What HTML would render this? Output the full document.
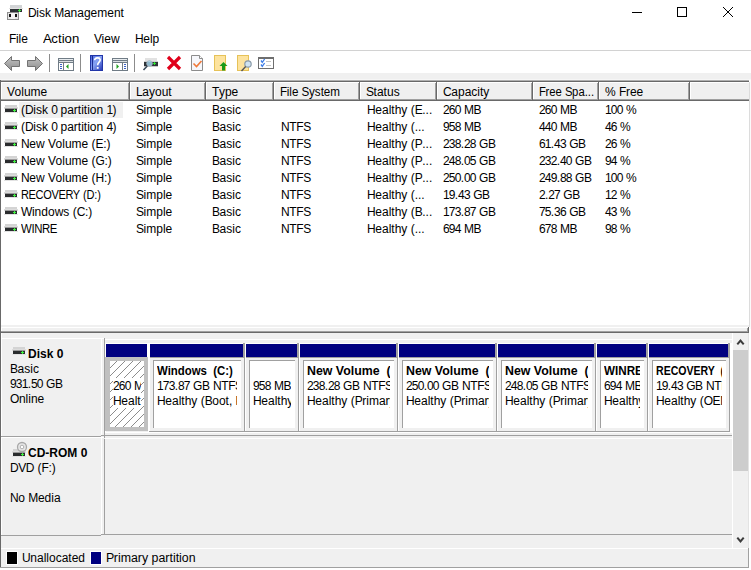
<!DOCTYPE html>
<html><head><meta charset="utf-8">
<style>
*{margin:0;padding:0;box-sizing:border-box}
html,body{width:751px;height:570px;overflow:hidden;background:#fff}
body{position:relative;font-family:"Liberation Sans",sans-serif;font-size:12px;color:#000}
.a{position:absolute}
.t{position:absolute;white-space:pre;line-height:15px;font-size:12px}
.b{font-weight:bold}
i{font-style:normal}
u{text-decoration:none}
svg{position:absolute;overflow:visible}
</style></head><body>
<div class="t" style="left:28px;top:6px;"><u style="letter-spacing:-0.4px">D</u>isk <u style="letter-spacing:-0.4px">M</u>anagement</div>
<div class="a" style="left:632px;top:12px;width:10px;height:1px;background:#000;"></div>
<div class="a" style="left:677px;top:7px;width:10px;height:10px;background:transparent;border:1px solid #000"></div>
<svg style="left:0;top:0" width="751" height="30" shape-rendering="crispEdges"><path d="M723 7h1v1h-1zM732 7h1v1h-1zM724 8h1v1h-1zM731 8h1v1h-1zM725 9h1v1h-1zM730 9h1v1h-1zM726 10h1v1h-1zM729 10h1v1h-1zM727 11h1v1h-1zM728 11h1v1h-1zM728 12h1v1h-1zM727 12h1v1h-1zM729 13h1v1h-1zM726 13h1v1h-1zM730 14h1v1h-1zM725 14h1v1h-1zM731 15h1v1h-1zM724 15h1v1h-1zM732 16h1v1h-1zM723 16h1v1h-1z" fill="#000"/></svg>
<div class="t" style="left:9px;top:32px;"><u style="letter-spacing:-0.4px">F</u>ile</div>
<div class="t" style="left:43px;top:32px;"><span style="display:inline-block;transform:scaleX(1.1);transform-origin:0 0"><u style="letter-spacing:-0.4px">A</u>ction</span></div>
<div class="t" style="left:94px;top:32px;"><u style="letter-spacing:-0.4px">V</u>iew</div>
<div class="t" style="left:135px;top:32px;"><u style="letter-spacing:-0.4px">H</u>elp</div>
<div class="a" style="left:0px;top:50px;width:751px;height:1px;background:#d2d2d2;"></div>
<div class="a" style="left:49px;top:54px;width:1px;height:18px;background:#8c8c8c;"></div>
<div class="a" style="left:80px;top:54px;width:1px;height:18px;background:#8c8c8c;"></div>
<div class="a" style="left:134px;top:54px;width:1px;height:18px;background:#8c8c8c;"></div>
<div class="a" style="left:0px;top:73px;width:751px;height:7px;background:#f0f0f0;"></div>
<div class="a" style="left:0px;top:79px;width:751px;height:1px;background:#f6f6f6;"></div>
<div class="a" style="left:0px;top:80px;width:750px;height:1px;background:#b0b0b0;"></div>
<div class="a" style="left:0px;top:81px;width:750px;height:1px;background:#696969;"></div>
<div class="a" style="left:0px;top:80px;width:1px;height:247px;background:#696969;"></div>
<div class="a" style="left:1px;top:82px;width:748px;height:19px;background:#f0f0f0;"></div>
<div class="a" style="left:1px;top:82px;width:748px;height:1px;background:#fff;"></div>
<div class="a" style="left:1px;top:82px;width:1px;height:18px;background:#fff;"></div>
<div class="a" style="left:1px;top:99px;width:748px;height:1px;background:#a0a0a0;"></div>
<div class="a" style="left:1px;top:100px;width:748px;height:1px;background:#696969;"></div>
<div class="t" style="left:7px;top:85px;"><u style="letter-spacing:-0.4px">V</u>olume</div>
<div class="a" style="left:128px;top:83px;width:1px;height:16px;background:#a0a0a0;"></div>
<div class="a" style="left:129px;top:82px;width:1px;height:18px;background:#696969;"></div>
<div class="a" style="left:130px;top:82px;width:1px;height:17px;background:#fff;"></div>
<div class="t" style="left:136px;top:85px;"><u style="letter-spacing:-0.4px">L</u>ayout</div>
<div class="a" style="left:204px;top:83px;width:1px;height:16px;background:#a0a0a0;"></div>
<div class="a" style="left:205px;top:82px;width:1px;height:18px;background:#696969;"></div>
<div class="a" style="left:206px;top:82px;width:1px;height:17px;background:#fff;"></div>
<div class="t" style="left:212px;top:85px;"><u style="letter-spacing:-0.4px">T</u>ype</div>
<div class="a" style="left:272px;top:83px;width:1px;height:16px;background:#a0a0a0;"></div>
<div class="a" style="left:273px;top:82px;width:1px;height:18px;background:#696969;"></div>
<div class="a" style="left:274px;top:82px;width:1px;height:17px;background:#fff;"></div>
<div class="t" style="left:280px;top:85px;"><span style="display:inline-block;transform:scaleX(0.97);transform-origin:0 0"><u style="letter-spacing:-0.4px">F</u>ile <u style="letter-spacing:-0.4px">S</u>ystem</span></div>
<div class="a" style="left:358px;top:83px;width:1px;height:16px;background:#a0a0a0;"></div>
<div class="a" style="left:359px;top:82px;width:1px;height:18px;background:#696969;"></div>
<div class="a" style="left:360px;top:82px;width:1px;height:17px;background:#fff;"></div>
<div class="t" style="left:366px;top:85px;"><u style="letter-spacing:-0.4px">S</u>tatus</div>
<div class="a" style="left:435px;top:83px;width:1px;height:16px;background:#a0a0a0;"></div>
<div class="a" style="left:436px;top:82px;width:1px;height:18px;background:#696969;"></div>
<div class="a" style="left:437px;top:82px;width:1px;height:17px;background:#fff;"></div>
<div class="t" style="left:443px;top:85px;"><u style="letter-spacing:-0.4px">C</u>apacity</div>
<div class="a" style="left:531px;top:83px;width:1px;height:16px;background:#a0a0a0;"></div>
<div class="a" style="left:532px;top:82px;width:1px;height:18px;background:#696969;"></div>
<div class="a" style="left:533px;top:82px;width:1px;height:17px;background:#fff;"></div>
<div class="t" style="left:539px;top:85px;"><span style="display:inline-block;transform:scaleX(0.94);transform-origin:0 0"><u style="letter-spacing:-0.4px">F</u>ree <u style="letter-spacing:-0.4px">S</u>pa...</span></div>
<div class="a" style="left:597px;top:83px;width:1px;height:16px;background:#a0a0a0;"></div>
<div class="a" style="left:598px;top:82px;width:1px;height:18px;background:#696969;"></div>
<div class="a" style="left:599px;top:82px;width:1px;height:17px;background:#fff;"></div>
<div class="t" style="left:605px;top:85px;">% <u style="letter-spacing:-0.4px">F</u>ree</div>
<div class="a" style="left:688px;top:83px;width:1px;height:16px;background:#a0a0a0;"></div>
<div class="a" style="left:689px;top:82px;width:1px;height:18px;background:#696969;"></div>
<div class="a" style="left:690px;top:82px;width:1px;height:17px;background:#fff;"></div>
<div class="a" style="left:749px;top:82px;width:1px;height:245px;background:#dcdcdc;"></div>
<div class="a" style="left:749px;top:80px;width:1px;height:249px;background:#fff;"></div>
<div class="a" style="left:1px;top:101px;width:748px;height:224px;background:#fff;"></div>
<div class="a" style="left:19px;top:102px;width:104px;height:16px;background:#f0f0f0;"></div>
<svg style="left:4px;top:105px" width="14" height="8" shape-rendering="crispEdges"><rect x="1" y="0" width="12" height="3" fill="#d4d4d4"/><rect x="0" y="2" width="14" height="2" fill="#dcdcdc"/><rect x="1" y="3" width="12" height="1" fill="#9a9a9a"/><rect x="1" y="4" width="12" height="3" fill="#2a2c2e"/><rect x="0" y="7" width="14" height="1" fill="#e2e2e2"/><rect x="9" y="5" width="3" height="1" fill="#3ef03e"/><rect x="10" y="4" width="1" height="3" fill="#3ef03e"/></svg>
<div class="t" style="left:21px;top:103px;">(<u style="letter-spacing:-0.4px">D</u>isk <i style="letter-spacing:-0.8px">0</i> partition <i style="letter-spacing:-0.8px">1</i>)</div>
<div class="t" style="left:136px;top:103px;"><u style="letter-spacing:-0.4px">S</u>imple</div>
<div class="t" style="left:212px;top:103px;"><u style="letter-spacing:-0.4px">B</u>asic</div>
<div class="t" style="left:367px;top:103px;"><u style="letter-spacing:-0.4px">H</u>ealthy (<u style="letter-spacing:-0.4px">E</u>...</div>
<div class="t" style="left:443px;top:103px;"><i style="letter-spacing:-0.8px">260</i> <u style="letter-spacing:-0.4px">MB</u></div>
<div class="t" style="left:539px;top:103px;"><i style="letter-spacing:-0.8px">260</i> <u style="letter-spacing:-0.4px">MB</u></div>
<div class="t" style="left:605px;top:103px;"><i style="letter-spacing:-0.8px">100</i> %</div>
<svg style="left:4px;top:122px" width="14" height="8" shape-rendering="crispEdges"><rect x="1" y="0" width="12" height="3" fill="#d4d4d4"/><rect x="0" y="2" width="14" height="2" fill="#dcdcdc"/><rect x="1" y="3" width="12" height="1" fill="#9a9a9a"/><rect x="1" y="4" width="12" height="3" fill="#2a2c2e"/><rect x="0" y="7" width="14" height="1" fill="#e2e2e2"/><rect x="9" y="5" width="3" height="1" fill="#3ef03e"/><rect x="10" y="4" width="1" height="3" fill="#3ef03e"/></svg>
<div class="t" style="left:21px;top:120px;">(<u style="letter-spacing:-0.4px">D</u>isk <i style="letter-spacing:-0.8px">0</i> partition <i style="letter-spacing:-0.8px">4</i>)</div>
<div class="t" style="left:136px;top:120px;"><u style="letter-spacing:-0.4px">S</u>imple</div>
<div class="t" style="left:212px;top:120px;"><u style="letter-spacing:-0.4px">B</u>asic</div>
<div class="t" style="left:281px;top:120px;"><u style="letter-spacing:-0.4px">NTFS</u></div>
<div class="t" style="left:367px;top:120px;"><u style="letter-spacing:-0.4px">H</u>ealthy (...</div>
<div class="t" style="left:443px;top:120px;"><i style="letter-spacing:-0.8px">958</i> <u style="letter-spacing:-0.4px">MB</u></div>
<div class="t" style="left:539px;top:120px;"><i style="letter-spacing:-0.8px">440</i> <u style="letter-spacing:-0.4px">MB</u></div>
<div class="t" style="left:605px;top:120px;"><i style="letter-spacing:-0.8px">46</i> %</div>
<svg style="left:4px;top:139px" width="14" height="8" shape-rendering="crispEdges"><rect x="1" y="0" width="12" height="3" fill="#d4d4d4"/><rect x="0" y="2" width="14" height="2" fill="#dcdcdc"/><rect x="1" y="3" width="12" height="1" fill="#9a9a9a"/><rect x="1" y="4" width="12" height="3" fill="#2a2c2e"/><rect x="0" y="7" width="14" height="1" fill="#e2e2e2"/><rect x="9" y="5" width="3" height="1" fill="#3ef03e"/><rect x="10" y="4" width="1" height="3" fill="#3ef03e"/></svg>
<div class="t" style="left:21px;top:137px;"><u style="letter-spacing:-0.4px">N</u>ew <u style="letter-spacing:-0.4px">V</u>olume (<u style="letter-spacing:-0.4px">E</u>:)</div>
<div class="t" style="left:136px;top:137px;"><u style="letter-spacing:-0.4px">S</u>imple</div>
<div class="t" style="left:212px;top:137px;"><u style="letter-spacing:-0.4px">B</u>asic</div>
<div class="t" style="left:281px;top:137px;"><u style="letter-spacing:-0.4px">NTFS</u></div>
<div class="t" style="left:367px;top:137px;"><u style="letter-spacing:-0.4px">H</u>ealthy (<u style="letter-spacing:-0.4px">P</u>...</div>
<div class="t" style="left:443px;top:137px;"><i style="letter-spacing:-0.8px">238</i>.<i style="letter-spacing:-0.8px">28</i> <u style="letter-spacing:-0.4px">GB</u></div>
<div class="t" style="left:539px;top:137px;"><i style="letter-spacing:-0.8px">61</i>.<i style="letter-spacing:-0.8px">43</i> <u style="letter-spacing:-0.4px">GB</u></div>
<div class="t" style="left:605px;top:137px;"><i style="letter-spacing:-0.8px">26</i> %</div>
<svg style="left:4px;top:156px" width="14" height="8" shape-rendering="crispEdges"><rect x="1" y="0" width="12" height="3" fill="#d4d4d4"/><rect x="0" y="2" width="14" height="2" fill="#dcdcdc"/><rect x="1" y="3" width="12" height="1" fill="#9a9a9a"/><rect x="1" y="4" width="12" height="3" fill="#2a2c2e"/><rect x="0" y="7" width="14" height="1" fill="#e2e2e2"/><rect x="9" y="5" width="3" height="1" fill="#3ef03e"/><rect x="10" y="4" width="1" height="3" fill="#3ef03e"/></svg>
<div class="t" style="left:21px;top:154px;"><u style="letter-spacing:-0.4px">N</u>ew <u style="letter-spacing:-0.4px">V</u>olume (<u style="letter-spacing:-0.4px">G</u>:)</div>
<div class="t" style="left:136px;top:154px;"><u style="letter-spacing:-0.4px">S</u>imple</div>
<div class="t" style="left:212px;top:154px;"><u style="letter-spacing:-0.4px">B</u>asic</div>
<div class="t" style="left:281px;top:154px;"><u style="letter-spacing:-0.4px">NTFS</u></div>
<div class="t" style="left:367px;top:154px;"><u style="letter-spacing:-0.4px">H</u>ealthy (<u style="letter-spacing:-0.4px">P</u>...</div>
<div class="t" style="left:443px;top:154px;"><i style="letter-spacing:-0.8px">248</i>.<i style="letter-spacing:-0.8px">05</i> <u style="letter-spacing:-0.4px">GB</u></div>
<div class="t" style="left:539px;top:154px;"><i style="letter-spacing:-0.8px">232</i>.<i style="letter-spacing:-0.8px">40</i> <u style="letter-spacing:-0.4px">GB</u></div>
<div class="t" style="left:605px;top:154px;"><i style="letter-spacing:-0.8px">94</i> %</div>
<svg style="left:4px;top:173px" width="14" height="8" shape-rendering="crispEdges"><rect x="1" y="0" width="12" height="3" fill="#d4d4d4"/><rect x="0" y="2" width="14" height="2" fill="#dcdcdc"/><rect x="1" y="3" width="12" height="1" fill="#9a9a9a"/><rect x="1" y="4" width="12" height="3" fill="#2a2c2e"/><rect x="0" y="7" width="14" height="1" fill="#e2e2e2"/><rect x="9" y="5" width="3" height="1" fill="#3ef03e"/><rect x="10" y="4" width="1" height="3" fill="#3ef03e"/></svg>
<div class="t" style="left:21px;top:171px;"><u style="letter-spacing:-0.4px">N</u>ew <u style="letter-spacing:-0.4px">V</u>olume (<u style="letter-spacing:-0.4px">H</u>:)</div>
<div class="t" style="left:136px;top:171px;"><u style="letter-spacing:-0.4px">S</u>imple</div>
<div class="t" style="left:212px;top:171px;"><u style="letter-spacing:-0.4px">B</u>asic</div>
<div class="t" style="left:281px;top:171px;"><u style="letter-spacing:-0.4px">NTFS</u></div>
<div class="t" style="left:367px;top:171px;"><u style="letter-spacing:-0.4px">H</u>ealthy (<u style="letter-spacing:-0.4px">P</u>...</div>
<div class="t" style="left:443px;top:171px;"><i style="letter-spacing:-0.8px">250</i>.<i style="letter-spacing:-0.8px">00</i> <u style="letter-spacing:-0.4px">GB</u></div>
<div class="t" style="left:539px;top:171px;"><i style="letter-spacing:-0.8px">249</i>.<i style="letter-spacing:-0.8px">88</i> <u style="letter-spacing:-0.4px">GB</u></div>
<div class="t" style="left:605px;top:171px;"><i style="letter-spacing:-0.8px">100</i> %</div>
<svg style="left:4px;top:190px" width="14" height="8" shape-rendering="crispEdges"><rect x="1" y="0" width="12" height="3" fill="#d4d4d4"/><rect x="0" y="2" width="14" height="2" fill="#dcdcdc"/><rect x="1" y="3" width="12" height="1" fill="#9a9a9a"/><rect x="1" y="4" width="12" height="3" fill="#2a2c2e"/><rect x="0" y="7" width="14" height="1" fill="#e2e2e2"/><rect x="9" y="5" width="3" height="1" fill="#3ef03e"/><rect x="10" y="4" width="1" height="3" fill="#3ef03e"/></svg>
<div class="t" style="left:21px;top:188px;"><span style="display:inline-block;transform:scaleX(0.92);transform-origin:0 0"><u style="letter-spacing:-0.4px">RECOVERY</u> (<u style="letter-spacing:-0.4px">D</u>:)</span></div>
<div class="t" style="left:136px;top:188px;"><u style="letter-spacing:-0.4px">S</u>imple</div>
<div class="t" style="left:212px;top:188px;"><u style="letter-spacing:-0.4px">B</u>asic</div>
<div class="t" style="left:281px;top:188px;"><u style="letter-spacing:-0.4px">NTFS</u></div>
<div class="t" style="left:367px;top:188px;"><u style="letter-spacing:-0.4px">H</u>ealthy (...</div>
<div class="t" style="left:443px;top:188px;"><i style="letter-spacing:-0.8px">19</i>.<i style="letter-spacing:-0.8px">43</i> <u style="letter-spacing:-0.4px">GB</u></div>
<div class="t" style="left:539px;top:188px;"><i style="letter-spacing:-0.8px">2</i>.<i style="letter-spacing:-0.8px">27</i> <u style="letter-spacing:-0.4px">GB</u></div>
<div class="t" style="left:605px;top:188px;"><i style="letter-spacing:-0.8px">12</i> %</div>
<svg style="left:4px;top:207px" width="14" height="8" shape-rendering="crispEdges"><rect x="1" y="0" width="12" height="3" fill="#d4d4d4"/><rect x="0" y="2" width="14" height="2" fill="#dcdcdc"/><rect x="1" y="3" width="12" height="1" fill="#9a9a9a"/><rect x="1" y="4" width="12" height="3" fill="#2a2c2e"/><rect x="0" y="7" width="14" height="1" fill="#e2e2e2"/><rect x="9" y="5" width="3" height="1" fill="#3ef03e"/><rect x="10" y="4" width="1" height="3" fill="#3ef03e"/></svg>
<div class="t" style="left:21px;top:205px;"><u style="letter-spacing:-0.4px">W</u>indows (<u style="letter-spacing:-0.4px">C</u>:)</div>
<div class="t" style="left:136px;top:205px;"><u style="letter-spacing:-0.4px">S</u>imple</div>
<div class="t" style="left:212px;top:205px;"><u style="letter-spacing:-0.4px">B</u>asic</div>
<div class="t" style="left:281px;top:205px;"><u style="letter-spacing:-0.4px">NTFS</u></div>
<div class="t" style="left:367px;top:205px;"><u style="letter-spacing:-0.4px">H</u>ealthy (<u style="letter-spacing:-0.4px">B</u>...</div>
<div class="t" style="left:443px;top:205px;"><i style="letter-spacing:-0.8px">173</i>.<i style="letter-spacing:-0.8px">87</i> <u style="letter-spacing:-0.4px">GB</u></div>
<div class="t" style="left:539px;top:205px;"><i style="letter-spacing:-0.8px">75</i>.<i style="letter-spacing:-0.8px">36</i> <u style="letter-spacing:-0.4px">GB</u></div>
<div class="t" style="left:605px;top:205px;"><i style="letter-spacing:-0.8px">43</i> %</div>
<svg style="left:4px;top:224px" width="14" height="8" shape-rendering="crispEdges"><rect x="1" y="0" width="12" height="3" fill="#d4d4d4"/><rect x="0" y="2" width="14" height="2" fill="#dcdcdc"/><rect x="1" y="3" width="12" height="1" fill="#9a9a9a"/><rect x="1" y="4" width="12" height="3" fill="#2a2c2e"/><rect x="0" y="7" width="14" height="1" fill="#e2e2e2"/><rect x="9" y="5" width="3" height="1" fill="#3ef03e"/><rect x="10" y="4" width="1" height="3" fill="#3ef03e"/></svg>
<div class="t" style="left:21px;top:222px;"><span style="display:inline-block;transform:scaleX(0.95);transform-origin:0 0"><u style="letter-spacing:-0.4px">WINRE</u></span></div>
<div class="t" style="left:136px;top:222px;"><u style="letter-spacing:-0.4px">S</u>imple</div>
<div class="t" style="left:212px;top:222px;"><u style="letter-spacing:-0.4px">B</u>asic</div>
<div class="t" style="left:281px;top:222px;"><u style="letter-spacing:-0.4px">NTFS</u></div>
<div class="t" style="left:367px;top:222px;"><u style="letter-spacing:-0.4px">H</u>ealthy (...</div>
<div class="t" style="left:443px;top:222px;"><i style="letter-spacing:-0.8px">694</i> <u style="letter-spacing:-0.4px">MB</u></div>
<div class="t" style="left:539px;top:222px;"><i style="letter-spacing:-0.8px">678</i> <u style="letter-spacing:-0.4px">MB</u></div>
<div class="t" style="left:605px;top:222px;"><i style="letter-spacing:-0.8px">98</i> %</div>
<div class="a" style="left:1px;top:325px;width:748px;height:2px;background:#f0f0f0;"></div>
<div class="a" style="left:750px;top:80px;width:1px;height:249px;background:#fafafa;"></div>
<div class="a" style="left:749px;top:82px;width:1px;height:245px;background:#dcdcdc;"></div>
<div class="a" style="left:0px;top:327px;width:748px;height:1px;background:#fff;"></div>
<div class="a" style="left:1px;top:328px;width:747px;height:3px;background:#f0f0f0;"></div>
<div class="a" style="left:1px;top:328px;width:1px;height:3px;background:#fff;"></div>
<div class="a" style="left:747px;top:328px;width:1px;height:3px;background:#a0a0a0;"></div>
<div class="a" style="left:748px;top:327px;width:1px;height:6px;background:#696969;"></div>
<div class="a" style="left:0px;top:331px;width:748px;height:1px;background:#a0a0a0;"></div>
<div class="a" style="left:0px;top:332px;width:749px;height:1px;background:#696969;"></div>
<div class="a" style="left:0px;top:327px;width:1px;height:241px;background:#696969;"></div>
<div class="a" style="left:1px;top:333px;width:747px;height:202px;background:#f0f0f0;"></div>
<div class="a" style="left:1px;top:333px;width:1px;height:234px;background:#fff;"></div>
<div class="a" style="left:1px;top:338px;width:103px;height:1px;background:#fff;"></div>
<div class="a" style="left:101px;top:339px;width:1px;height:96px;background:#fff;"></div>
<div class="a" style="left:104px;top:338px;width:1px;height:100px;background:#a0a0a0;"></div>
<div class="a" style="left:1px;top:436px;width:100px;height:1px;background:#a0a0a0;"></div>
<div class="a" style="left:101px;top:435px;width:3px;height:1px;background:#a0a0a0;"></div>
<svg style="left:12px;top:347px" width="14" height="8" shape-rendering="crispEdges"><rect x="1" y="0" width="12" height="3" fill="#d4d4d4"/><rect x="0" y="2" width="14" height="2" fill="#dcdcdc"/><rect x="1" y="3" width="12" height="1" fill="#9a9a9a"/><rect x="1" y="4" width="12" height="3" fill="#2a2c2e"/><rect x="0" y="7" width="14" height="1" fill="#e2e2e2"/><rect x="9" y="5" width="3" height="1" fill="#3ef03e"/><rect x="10" y="4" width="1" height="3" fill="#3ef03e"/></svg>
<div class="t b" style="left:28px;top:347px;">Disk <i style="letter-spacing:-0.8px">0</i></div>
<div class="t" style="left:10px;top:362px;"><u style="letter-spacing:-0.4px">B</u>asic</div>
<div class="t" style="left:10px;top:377px;"><i style="letter-spacing:-0.8px">931</i>.<i style="letter-spacing:-0.8px">50</i> <u style="letter-spacing:-0.4px">GB</u></div>
<div class="t" style="left:10px;top:392px;"><u style="letter-spacing:-0.4px">O</u>nline</div>
<div class="a" style="left:105px;top:339px;width:627px;height:96px;background:#fff;"></div>
<div class="a" style="left:105px;top:338px;width:627px;height:5px;background:#f0f0f0;"></div>
<div class="a" style="left:105px;top:339px;width:627px;height:1px;background:#fff;"></div>
<div class="a" style="left:106px;top:343px;width:44px;height:1px;background:#fff;"></div>
<div class="a" style="left:106px;top:344px;width:41px;height:13px;background:#000080;"></div>
<div class="a" style="left:106px;top:357px;width:44px;height:75px;background:#f0f0f0;"></div>
<div class="a" style="left:106px;top:344px;width:41px;height:13px;background:#000080;"></div>
<div class="a" style="left:105px;top:357px;width:43px;height:74px;background:#c0c0c0;"></div>
<div class="a" style="left:148px;top:343px;width:2px;height:89px;background:#fff;"></div>
<svg style="left:0;top:0" width="751" height="570" shape-rendering="crispEdges"><rect x="110" y="361" width="34" height="66" fill="#fff"/><path d="M116 361h1v1h-1zM124 361h1v1h-1zM132 361h1v1h-1zM140 361h1v1h-1zM115 362h1v1h-1zM123 362h1v1h-1zM131 362h1v1h-1zM139 362h1v1h-1zM114 363h1v1h-1zM122 363h1v1h-1zM130 363h1v1h-1zM138 363h1v1h-1zM113 364h1v1h-1zM121 364h1v1h-1zM129 364h1v1h-1zM137 364h1v1h-1zM112 365h1v1h-1zM120 365h1v1h-1zM128 365h1v1h-1zM136 365h1v1h-1zM111 366h1v1h-1zM119 366h1v1h-1zM127 366h1v1h-1zM135 366h1v1h-1zM143 366h1v1h-1zM110 367h1v1h-1zM118 367h1v1h-1zM126 367h1v1h-1zM134 367h1v1h-1zM142 367h1v1h-1zM117 368h1v1h-1zM125 368h1v1h-1zM133 368h1v1h-1zM141 368h1v1h-1zM116 369h1v1h-1zM124 369h1v1h-1zM132 369h1v1h-1zM140 369h1v1h-1zM115 370h1v1h-1zM123 370h1v1h-1zM131 370h1v1h-1zM139 370h1v1h-1zM114 371h1v1h-1zM122 371h1v1h-1zM130 371h1v1h-1zM138 371h1v1h-1zM113 372h1v1h-1zM121 372h1v1h-1zM129 372h1v1h-1zM137 372h1v1h-1zM112 373h1v1h-1zM120 373h1v1h-1zM128 373h1v1h-1zM136 373h1v1h-1zM111 374h1v1h-1zM119 374h1v1h-1zM127 374h1v1h-1zM135 374h1v1h-1zM143 374h1v1h-1zM110 375h1v1h-1zM118 375h1v1h-1zM126 375h1v1h-1zM134 375h1v1h-1zM142 375h1v1h-1zM117 376h1v1h-1zM125 376h1v1h-1zM133 376h1v1h-1zM141 376h1v1h-1zM116 377h1v1h-1zM124 377h1v1h-1zM132 377h1v1h-1zM140 377h1v1h-1zM115 378h1v1h-1zM123 378h1v1h-1zM131 378h1v1h-1zM139 378h1v1h-1zM114 379h1v1h-1zM122 379h1v1h-1zM130 379h1v1h-1zM138 379h1v1h-1zM113 380h1v1h-1zM121 380h1v1h-1zM129 380h1v1h-1zM137 380h1v1h-1zM112 381h1v1h-1zM120 381h1v1h-1zM128 381h1v1h-1zM136 381h1v1h-1zM111 382h1v1h-1zM119 382h1v1h-1zM127 382h1v1h-1zM135 382h1v1h-1zM143 382h1v1h-1zM110 383h1v1h-1zM118 383h1v1h-1zM126 383h1v1h-1zM134 383h1v1h-1zM142 383h1v1h-1zM117 384h1v1h-1zM125 384h1v1h-1zM133 384h1v1h-1zM141 384h1v1h-1zM116 385h1v1h-1zM124 385h1v1h-1zM132 385h1v1h-1zM140 385h1v1h-1zM115 386h1v1h-1zM123 386h1v1h-1zM131 386h1v1h-1zM139 386h1v1h-1zM114 387h1v1h-1zM122 387h1v1h-1zM130 387h1v1h-1zM138 387h1v1h-1zM113 388h1v1h-1zM121 388h1v1h-1zM129 388h1v1h-1zM137 388h1v1h-1zM112 389h1v1h-1zM120 389h1v1h-1zM128 389h1v1h-1zM136 389h1v1h-1zM111 390h1v1h-1zM119 390h1v1h-1zM127 390h1v1h-1zM135 390h1v1h-1zM143 390h1v1h-1zM110 391h1v1h-1zM118 391h1v1h-1zM126 391h1v1h-1zM134 391h1v1h-1zM142 391h1v1h-1zM117 392h1v1h-1zM125 392h1v1h-1zM133 392h1v1h-1zM141 392h1v1h-1zM116 393h1v1h-1zM124 393h1v1h-1zM132 393h1v1h-1zM140 393h1v1h-1zM115 394h1v1h-1zM123 394h1v1h-1zM131 394h1v1h-1zM139 394h1v1h-1zM114 395h1v1h-1zM122 395h1v1h-1zM130 395h1v1h-1zM138 395h1v1h-1zM113 396h1v1h-1zM121 396h1v1h-1zM129 396h1v1h-1zM137 396h1v1h-1zM112 397h1v1h-1zM120 397h1v1h-1zM128 397h1v1h-1zM136 397h1v1h-1zM111 398h1v1h-1zM119 398h1v1h-1zM127 398h1v1h-1zM135 398h1v1h-1zM143 398h1v1h-1zM110 399h1v1h-1zM118 399h1v1h-1zM126 399h1v1h-1zM134 399h1v1h-1zM142 399h1v1h-1zM117 400h1v1h-1zM125 400h1v1h-1zM133 400h1v1h-1zM141 400h1v1h-1zM116 401h1v1h-1zM124 401h1v1h-1zM132 401h1v1h-1zM140 401h1v1h-1zM115 402h1v1h-1zM123 402h1v1h-1zM131 402h1v1h-1zM139 402h1v1h-1zM114 403h1v1h-1zM122 403h1v1h-1zM130 403h1v1h-1zM138 403h1v1h-1zM113 404h1v1h-1zM121 404h1v1h-1zM129 404h1v1h-1zM137 404h1v1h-1zM112 405h1v1h-1zM120 405h1v1h-1zM128 405h1v1h-1zM136 405h1v1h-1zM111 406h1v1h-1zM119 406h1v1h-1zM127 406h1v1h-1zM135 406h1v1h-1zM143 406h1v1h-1zM110 407h1v1h-1zM118 407h1v1h-1zM126 407h1v1h-1zM134 407h1v1h-1zM142 407h1v1h-1zM117 408h1v1h-1zM125 408h1v1h-1zM133 408h1v1h-1zM141 408h1v1h-1zM116 409h1v1h-1zM124 409h1v1h-1zM132 409h1v1h-1zM140 409h1v1h-1zM115 410h1v1h-1zM123 410h1v1h-1zM131 410h1v1h-1zM139 410h1v1h-1zM114 411h1v1h-1zM122 411h1v1h-1zM130 411h1v1h-1zM138 411h1v1h-1zM113 412h1v1h-1zM121 412h1v1h-1zM129 412h1v1h-1zM137 412h1v1h-1zM112 413h1v1h-1zM120 413h1v1h-1zM128 413h1v1h-1zM136 413h1v1h-1zM111 414h1v1h-1zM119 414h1v1h-1zM127 414h1v1h-1zM135 414h1v1h-1zM143 414h1v1h-1zM110 415h1v1h-1zM118 415h1v1h-1zM126 415h1v1h-1zM134 415h1v1h-1zM142 415h1v1h-1zM117 416h1v1h-1zM125 416h1v1h-1zM133 416h1v1h-1zM141 416h1v1h-1zM116 417h1v1h-1zM124 417h1v1h-1zM132 417h1v1h-1zM140 417h1v1h-1zM115 418h1v1h-1zM123 418h1v1h-1zM131 418h1v1h-1zM139 418h1v1h-1zM114 419h1v1h-1zM122 419h1v1h-1zM130 419h1v1h-1zM138 419h1v1h-1zM113 420h1v1h-1zM121 420h1v1h-1zM129 420h1v1h-1zM137 420h1v1h-1zM112 421h1v1h-1zM120 421h1v1h-1zM128 421h1v1h-1zM136 421h1v1h-1zM111 422h1v1h-1zM119 422h1v1h-1zM127 422h1v1h-1zM135 422h1v1h-1zM143 422h1v1h-1zM110 423h1v1h-1zM118 423h1v1h-1zM126 423h1v1h-1zM134 423h1v1h-1zM142 423h1v1h-1zM117 424h1v1h-1zM125 424h1v1h-1zM133 424h1v1h-1zM141 424h1v1h-1zM116 425h1v1h-1zM124 425h1v1h-1zM132 425h1v1h-1zM140 425h1v1h-1zM115 426h1v1h-1zM123 426h1v1h-1zM131 426h1v1h-1zM139 426h1v1h-1z" fill="#8c8c8c"/></svg>
<div class="a" style="left:113px;top:378px;width:28px;height:30px;background:#fff;"></div>
<div class="t" style="left:113px;top:379px;width:28px;overflow:hidden;"><i style="letter-spacing:-0.8px">260</i> <u style="letter-spacing:-0.4px">M</u></div>
<div class="t" style="left:113px;top:394px;width:28px;overflow:hidden;"><u style="letter-spacing:-0.4px">H</u>ealt</div>
<div class="a" style="left:150px;top:343px;width:96px;height:1px;background:#fff;"></div>
<div class="a" style="left:150px;top:344px;width:93px;height:13px;background:#000080;"></div>
<div class="a" style="left:150px;top:357px;width:96px;height:75px;background:#f0f0f0;"></div>
<div class="a" style="left:243px;top:343px;width:1px;height:14px;background:#a0a0a0;"></div>
<div class="a" style="left:244px;top:343px;width:1px;height:89px;background:#a0a0a0;"></div>
<div class="a" style="left:245px;top:343px;width:1px;height:89px;background:#fff;"></div>
<div class="a" style="left:150px;top:357px;width:95px;height:1px;background:#a0a0a0;"></div>
<div class="a" style="left:149px;top:431px;width:96px;height:1px;background:#a0a0a0;"></div>
<div class="a" style="left:153px;top:360px;width:88px;height:68px;background:#fff;border-top:1px solid #a0a0a0;border-left:1px solid #a0a0a0"></div>
<div class="t b" style="left:157px;top:364px;width:80px;overflow:hidden;"><span style="display:inline-block;transform:scaleX(0.95);transform-origin:0 0">Windows  (C:)</span></div>
<div class="t" style="left:157px;top:379px;width:80px;overflow:hidden;"><i style="letter-spacing:-0.8px">173</i>.<i style="letter-spacing:-0.8px">87</i> <u style="letter-spacing:-0.4px">GB</u> <u style="letter-spacing:-0.4px">NTFS</u></div>
<div class="t" style="left:157px;top:394px;width:80px;overflow:hidden;"><u style="letter-spacing:-0.4px">H</u>ealthy (<u style="letter-spacing:-0.4px">B</u>oot, <u style="letter-spacing:-0.4px">P</u>age <u style="letter-spacing:-0.4px">F</u>ile, <u style="letter-spacing:-0.4px">C</u>rash <u style="letter-spacing:-0.4px">D</u>ump, <u style="letter-spacing:-0.4px">P</u>rimary <u style="letter-spacing:-0.4px">P</u>artition)</div>
<div class="a" style="left:246px;top:343px;width:54px;height:1px;background:#fff;"></div>
<div class="a" style="left:246px;top:344px;width:51px;height:13px;background:#000080;"></div>
<div class="a" style="left:246px;top:357px;width:54px;height:75px;background:#f0f0f0;"></div>
<div class="a" style="left:297px;top:343px;width:1px;height:14px;background:#a0a0a0;"></div>
<div class="a" style="left:298px;top:343px;width:1px;height:89px;background:#a0a0a0;"></div>
<div class="a" style="left:299px;top:343px;width:1px;height:89px;background:#fff;"></div>
<div class="a" style="left:246px;top:357px;width:53px;height:1px;background:#a0a0a0;"></div>
<div class="a" style="left:245px;top:431px;width:54px;height:1px;background:#a0a0a0;"></div>
<div class="a" style="left:249px;top:360px;width:46px;height:68px;background:#fff;border-top:1px solid #a0a0a0;border-left:1px solid #a0a0a0"></div>
<div class="t" style="left:253px;top:379px;width:38px;overflow:hidden;"><i style="letter-spacing:-0.8px">958</i> <u style="letter-spacing:-0.4px">MB</u></div>
<div class="t" style="left:253px;top:394px;width:38px;overflow:hidden;"><u style="letter-spacing:-0.4px">H</u>ealthy (<u style="letter-spacing:-0.4px">OEM</u> <u style="letter-spacing:-0.4px">P</u>artition)</div>
<div class="a" style="left:300px;top:343px;width:99px;height:1px;background:#fff;"></div>
<div class="a" style="left:300px;top:344px;width:96px;height:13px;background:#000080;"></div>
<div class="a" style="left:300px;top:357px;width:99px;height:75px;background:#f0f0f0;"></div>
<div class="a" style="left:396px;top:343px;width:1px;height:14px;background:#a0a0a0;"></div>
<div class="a" style="left:397px;top:343px;width:1px;height:89px;background:#a0a0a0;"></div>
<div class="a" style="left:398px;top:343px;width:1px;height:89px;background:#fff;"></div>
<div class="a" style="left:300px;top:357px;width:98px;height:1px;background:#a0a0a0;"></div>
<div class="a" style="left:299px;top:431px;width:99px;height:1px;background:#a0a0a0;"></div>
<div class="a" style="left:303px;top:360px;width:91px;height:68px;background:#fff;border-top:1px solid #a0a0a0;border-left:1px solid #a0a0a0"></div>
<div class="t b" style="left:307px;top:364px;width:83px;overflow:hidden;"><span style="display:inline-block;transform:scaleX(1.03);transform-origin:0 0">New Volume  (E:)</span></div>
<div class="t" style="left:307px;top:379px;width:83px;overflow:hidden;"><i style="letter-spacing:-0.8px">238</i>.<i style="letter-spacing:-0.8px">28</i> <u style="letter-spacing:-0.4px">GB</u> <u style="letter-spacing:-0.4px">NTFS</u></div>
<div class="t" style="left:307px;top:394px;width:83px;overflow:hidden;"><u style="letter-spacing:-0.4px">H</u>ealthy (<u style="letter-spacing:-0.4px">P</u>rimary <u style="letter-spacing:-0.4px">P</u>artition)</div>
<div class="a" style="left:399px;top:343px;width:99px;height:1px;background:#fff;"></div>
<div class="a" style="left:399px;top:344px;width:96px;height:13px;background:#000080;"></div>
<div class="a" style="left:399px;top:357px;width:99px;height:75px;background:#f0f0f0;"></div>
<div class="a" style="left:495px;top:343px;width:1px;height:14px;background:#a0a0a0;"></div>
<div class="a" style="left:496px;top:343px;width:1px;height:89px;background:#a0a0a0;"></div>
<div class="a" style="left:497px;top:343px;width:1px;height:89px;background:#fff;"></div>
<div class="a" style="left:399px;top:357px;width:98px;height:1px;background:#a0a0a0;"></div>
<div class="a" style="left:398px;top:431px;width:99px;height:1px;background:#a0a0a0;"></div>
<div class="a" style="left:402px;top:360px;width:91px;height:68px;background:#fff;border-top:1px solid #a0a0a0;border-left:1px solid #a0a0a0"></div>
<div class="t b" style="left:406px;top:364px;width:83px;overflow:hidden;"><span style="display:inline-block;transform:scaleX(1.03);transform-origin:0 0">New Volume  (H:)</span></div>
<div class="t" style="left:406px;top:379px;width:83px;overflow:hidden;"><i style="letter-spacing:-0.8px">250</i>.<i style="letter-spacing:-0.8px">00</i> <u style="letter-spacing:-0.4px">GB</u> <u style="letter-spacing:-0.4px">NTFS</u></div>
<div class="t" style="left:406px;top:394px;width:83px;overflow:hidden;"><u style="letter-spacing:-0.4px">H</u>ealthy (<u style="letter-spacing:-0.4px">P</u>rimary <u style="letter-spacing:-0.4px">P</u>artition)</div>
<div class="a" style="left:498px;top:343px;width:99px;height:1px;background:#fff;"></div>
<div class="a" style="left:498px;top:344px;width:96px;height:13px;background:#000080;"></div>
<div class="a" style="left:498px;top:357px;width:99px;height:75px;background:#f0f0f0;"></div>
<div class="a" style="left:594px;top:343px;width:1px;height:14px;background:#a0a0a0;"></div>
<div class="a" style="left:595px;top:343px;width:1px;height:89px;background:#a0a0a0;"></div>
<div class="a" style="left:596px;top:343px;width:1px;height:89px;background:#fff;"></div>
<div class="a" style="left:498px;top:357px;width:98px;height:1px;background:#a0a0a0;"></div>
<div class="a" style="left:497px;top:431px;width:99px;height:1px;background:#a0a0a0;"></div>
<div class="a" style="left:501px;top:360px;width:91px;height:68px;background:#fff;border-top:1px solid #a0a0a0;border-left:1px solid #a0a0a0"></div>
<div class="t b" style="left:505px;top:364px;width:83px;overflow:hidden;"><span style="display:inline-block;transform:scaleX(1.03);transform-origin:0 0">New Volume  (G:)</span></div>
<div class="t" style="left:505px;top:379px;width:83px;overflow:hidden;"><i style="letter-spacing:-0.8px">248</i>.<i style="letter-spacing:-0.8px">05</i> <u style="letter-spacing:-0.4px">GB</u> <u style="letter-spacing:-0.4px">NTFS</u></div>
<div class="t" style="left:505px;top:394px;width:83px;overflow:hidden;"><u style="letter-spacing:-0.4px">H</u>ealthy (<u style="letter-spacing:-0.4px">P</u>rimary <u style="letter-spacing:-0.4px">P</u>artition)</div>
<div class="a" style="left:597px;top:343px;width:52px;height:1px;background:#fff;"></div>
<div class="a" style="left:597px;top:344px;width:49px;height:13px;background:#000080;"></div>
<div class="a" style="left:597px;top:357px;width:52px;height:75px;background:#f0f0f0;"></div>
<div class="a" style="left:646px;top:343px;width:1px;height:14px;background:#a0a0a0;"></div>
<div class="a" style="left:647px;top:343px;width:1px;height:89px;background:#a0a0a0;"></div>
<div class="a" style="left:648px;top:343px;width:1px;height:89px;background:#fff;"></div>
<div class="a" style="left:597px;top:357px;width:51px;height:1px;background:#a0a0a0;"></div>
<div class="a" style="left:596px;top:431px;width:52px;height:1px;background:#a0a0a0;"></div>
<div class="a" style="left:600px;top:360px;width:44px;height:68px;background:#fff;border-top:1px solid #a0a0a0;border-left:1px solid #a0a0a0"></div>
<div class="t b" style="left:604px;top:364px;width:36px;overflow:hidden;"><span style="display:inline-block;transform:scaleX(0.97);transform-origin:0 0">WINRE</span></div>
<div class="t" style="left:604px;top:379px;width:36px;overflow:hidden;"><i style="letter-spacing:-0.8px">694</i> <u style="letter-spacing:-0.4px">MB</u> <u style="letter-spacing:-0.4px">NTFS</u></div>
<div class="t" style="left:604px;top:394px;width:36px;overflow:hidden;"><u style="letter-spacing:-0.4px">H</u>ealthy (<u style="letter-spacing:-0.4px">OEM</u> <u style="letter-spacing:-0.4px">P</u>artition)</div>
<div class="a" style="left:649px;top:343px;width:82px;height:1px;background:#fff;"></div>
<div class="a" style="left:649px;top:344px;width:79px;height:13px;background:#000080;"></div>
<div class="a" style="left:649px;top:357px;width:82px;height:75px;background:#f0f0f0;"></div>
<div class="a" style="left:728px;top:343px;width:1px;height:14px;background:#a0a0a0;"></div>
<div class="a" style="left:729px;top:343px;width:1px;height:89px;background:#a0a0a0;"></div>
<div class="a" style="left:730px;top:343px;width:1px;height:89px;background:#fff;"></div>
<div class="a" style="left:649px;top:357px;width:81px;height:1px;background:#a0a0a0;"></div>
<div class="a" style="left:648px;top:431px;width:82px;height:1px;background:#a0a0a0;"></div>
<div class="a" style="left:652px;top:360px;width:74px;height:68px;background:#fff;border-top:1px solid #a0a0a0;border-left:1px solid #a0a0a0"></div>
<div class="t b" style="left:656px;top:364px;width:66px;overflow:hidden;"><span style="display:inline-block;transform:scaleX(0.88);transform-origin:0 0">RECOVERY  (D:)</span></div>
<div class="t" style="left:656px;top:379px;width:66px;overflow:hidden;"><i style="letter-spacing:-0.8px">19</i>.<i style="letter-spacing:-0.8px">43</i> <u style="letter-spacing:-0.4px">GB</u> <u style="letter-spacing:-0.4px">NTFS</u></div>
<div class="t" style="left:656px;top:394px;width:66px;overflow:hidden;"><u style="letter-spacing:-0.4px">H</u>ealthy (<u style="letter-spacing:-0.4px">OEM</u> <u style="letter-spacing:-0.4px">P</u>artition)</div>
<div class="a" style="left:105px;top:433px;width:627px;height:2px;background:#f0f0f0;"></div>
<div class="a" style="left:105px;top:435px;width:627px;height:1px;background:#a0a0a0;"></div>
<div class="a" style="left:105px;top:436px;width:627px;height:2px;background:#f0f0f0;"></div>
<div class="a" style="left:1px;top:437px;width:103px;height:1px;background:#fff;"></div>
<div class="a" style="left:105px;top:438px;width:627px;height:1px;background:#fff;"></div>
<div class="a" style="left:101px;top:438px;width:1px;height:96px;background:#fff;"></div>
<div class="a" style="left:104px;top:439px;width:1px;height:96px;background:#a0a0a0;"></div>
<div class="a" style="left:1px;top:535px;width:100px;height:1px;background:#a0a0a0;"></div>
<div class="a" style="left:101px;top:534px;width:631px;height:1px;background:#a0a0a0;"></div>
<div class="t b" style="left:28px;top:446px;">CD-ROM <i style="letter-spacing:-0.8px">0</i></div>
<div class="t" style="left:10px;top:461px;"><u style="letter-spacing:-0.4px">DVD</u> (<u style="letter-spacing:-0.4px">F</u>:)</div>
<div class="t" style="left:10px;top:491px;"><u style="letter-spacing:-0.4px">N</u>o <u style="letter-spacing:-0.4px">M</u>edia</div>
<svg style="left:12px;top:449px" width="14" height="8" shape-rendering="crispEdges"><rect x="1" y="0" width="12" height="3" fill="#d4d4d4"/><rect x="0" y="2" width="14" height="2" fill="#dcdcdc"/><rect x="1" y="3" width="12" height="1" fill="#9a9a9a"/><rect x="1" y="4" width="12" height="3" fill="#2a2c2e"/><rect x="0" y="7" width="14" height="1" fill="#e2e2e2"/><rect x="9" y="5" width="3" height="1" fill="#3ef03e"/><rect x="10" y="4" width="1" height="3" fill="#3ef03e"/></svg>
<svg style="left:12px;top:440px" width="16" height="12"><circle cx="10" cy="7" r="4.5" fill="#e6e6e6" stroke="#a8a8a8" stroke-width="1.3"/><circle cx="10" cy="7" r="1.8" fill="#fff" stroke="#b0b0b0" stroke-width="1"/></svg>
<div class="a" style="left:1px;top:536px;width:747px;height:12px;background:#f0f0f0;"></div>
<div class="a" style="left:101px;top:535px;width:647px;height:1px;background:#f0f0f0;"></div>
<div class="a" style="left:1px;top:548px;width:747px;height:19px;background:#f0f0f0;"></div>
<div class="a" style="left:1px;top:548px;width:747px;height:1px;background:#fff;"></div>
<div class="a" style="left:748px;top:548px;width:1px;height:20px;background:#a0a0a0;"></div>
<div class="a" style="left:0px;top:567px;width:749px;height:1px;background:#a0a0a0;"></div>
<div class="a" style="left:6px;top:551px;width:12px;height:14px;background:#fff;"></div>
<div class="a" style="left:7px;top:552px;width:10px;height:12px;background:#000;"></div>
<div class="t" style="left:22px;top:551px;"><u style="letter-spacing:-0.4px">U</u>nallocated</div>
<div class="a" style="left:90px;top:551px;width:12px;height:14px;background:#fff;"></div>
<div class="a" style="left:91px;top:552px;width:10px;height:12px;background:#000080;"></div>
<div class="t" style="left:106px;top:551px;"><span style="display:inline-block;transform:scaleX(1.03);transform-origin:0 0"><u style="letter-spacing:-0.4px">P</u>rimary partition</span></div>
<div class="a" style="left:732px;top:333px;width:1px;height:215px;background:#fff;"></div>
<div class="a" style="left:733px;top:333px;width:15px;height:215px;background:#f0f0f0;"></div>
<div class="a" style="left:733px;top:350px;width:15px;height:121px;background:#cdcdcd;"></div>
<svg style="left:0;top:0" width="751" height="570"><path d="M737.3 344.3L740.5 340.5L743.7 344.3M737.3 537.7L740.5 541.5L743.7 537.7" fill="none" stroke="#3c3c3c" stroke-width="2"/></svg>
<div class="a" style="left:748px;top:333px;width:1px;height:215px;background:#e3e3e3;"></div>
<svg style="left:0;top:0" width="300" height="80" shape-rendering="crispEdges">
<defs>
<linearGradient id="ga" x1="0" y1="0" x2="0" y2="1"><stop offset="0" stop-color="#c4c4c4"/><stop offset="1" stop-color="#8e8e8e"/></linearGradient>
<linearGradient id="gb" x1="0" y1="0" x2="1" y2="1"><stop offset="0" stop-color="#4a66e0"/><stop offset="0.45" stop-color="#88a4f4"/><stop offset="1" stop-color="#2a3cb8"/></linearGradient>
</defs>
<!-- title icon -->
<rect x="10" y="5" width="12" height="4" fill="#d2d4d6"/>
<rect x="9" y="8" width="14" height="1" fill="#e2e2e2"/>
<rect x="10" y="9" width="12" height="3" fill="#2c3034"/>
<rect x="18" y="10" width="3" height="1" fill="#3ee03e"/>
<rect x="19" y="9" width="1" height="3" fill="#3ee03e"/>
<rect x="7" y="12" width="12" height="8" fill="#8e8e8e"/>
<rect x="8" y="13" width="10" height="6" fill="#e6e6e6"/>
<rect x="11" y="13" width="4" height="6" fill="#f6f6f6"/>
<rect x="9" y="14" width="2" height="3" fill="#151515"/>
<rect x="15" y="14" width="2" height="3" fill="#151515"/>
</svg>
<svg style="left:0;top:0" width="300" height="80">
<!-- back/forward arrows -->
<path d="M4.5 63.5 L11.5 56.5 L11.5 60.5 L19.5 60.5 L19.5 66.5 L11.5 66.5 L11.5 70.5 Z" fill="url(#ga)" stroke="#737373" stroke-width="1"/>
<path d="M42.5 63.5 L35.5 56.5 L35.5 60.5 L27.5 60.5 L27.5 66.5 L35.5 66.5 L35.5 70.5 Z" fill="url(#ga)" stroke="#737373" stroke-width="1"/>
</svg>
<svg style="left:0;top:0" width="300" height="80" shape-rendering="crispEdges">
<!-- console tree icon -->
<rect x="58" y="58" width="16" height="13" fill="#707c86"/>
<rect x="59" y="59" width="14" height="1" fill="#e8ecef"/>
<rect x="59" y="61" width="14" height="1" fill="#d8dde0"/>
<rect x="59" y="63" width="4" height="7" fill="#fff"/>
<rect x="64" y="63" width="9" height="7" fill="#fff"/>
<rect x="60" y="64" width="2" height="1" fill="#3a62c8"/>
<rect x="60" y="66" width="2" height="1" fill="#3a62c8"/>
<rect x="60" y="68" width="2" height="1" fill="#3a62c8"/>
<path d="M66 66.5 L68.5 64 L68.5 69 Z" fill="#20a020" shape-rendering="auto"/>
<!-- help book -->
<rect x="90" y="55" width="13" height="16" fill="#2236a8"/>
<rect x="91" y="56" width="11" height="14" fill="url(#gb)"/>
<rect x="92" y="56" width="1" height="14" fill="#1c2c90"/>
<!-- action pane icon -->
<rect x="112" y="58" width="16" height="13" fill="#707c86"/>
<rect x="113" y="59" width="14" height="1" fill="#e8ecef"/>
<rect x="113" y="61" width="14" height="1" fill="#d8dde0"/>
<rect x="113" y="63" width="9" height="7" fill="#fff"/>
<rect x="123" y="63" width="4" height="7" fill="#fff"/>
<rect x="124" y="64" width="2" height="1" fill="#3a62c8"/>
<rect x="124" y="66" width="2" height="1" fill="#3a62c8"/>
<rect x="124" y="68" width="2" height="1" fill="#3a62c8"/>
<path d="M119 66.5 L116.5 64 L116.5 69 Z" fill="#20a020" shape-rendering="auto"/>
<!-- drive with magnifier -->
<rect x="145" y="58" width="12" height="4" fill="#e2e2e2"/><rect x="144" y="61" width="14" height="1" fill="#d0d0d0"/>
<rect x="144" y="62" width="14" height="4" fill="#2f3438"/>
<rect x="144" y="66" width="14" height="1" fill="#c8c8c8"/>
<rect x="153" y="63" width="3" height="1" fill="#30e030"/>
<rect x="154" y="62" width="1" height="3" fill="#30e030"/>
<!-- page yellow w/ arrow -->
<rect x="214" y="55" width="12" height="16" fill="#e6c258"/>
<rect x="215" y="56" width="10" height="14" fill="#fde39e"/>
<!-- page yellow w/ magnifier -->
<rect x="237" y="55" width="12" height="16" fill="#e6c258"/>
<rect x="238" y="56" width="10" height="14" fill="#fde39e"/>
<!-- checklist -->
<rect x="258" y="57" width="16" height="12" fill="#6e6e6e"/>
<rect x="259" y="59" width="14" height="9" fill="#fff"/>
<rect x="266" y="61" width="5" height="1" fill="#c4c4c4"/>
<rect x="266" y="65" width="5" height="1" fill="#c4c4c4"/>
</svg>
<svg style="left:0;top:0" width="300" height="80">
<path d="M94.6 60.2C94.8 57.6 99.6 56.8 100.2 59.6C100.6 61.8 97.6 62.4 97.6 65.2" fill="none" stroke="#fff" stroke-width="1.6"/><rect x="96.8" y="67" width="1.8" height="1.8" fill="#fff"/>
<circle cx="149.5" cy="63.5" r="2.8" fill="#a8dcf4" fill-opacity="0.8" stroke="#a0b4c4" stroke-width="0.9"/>
<path d="M147.3 66 L143.5 70" stroke="#3a4a5a" stroke-width="1.6"/>
<path d="M168 57 L180 69 M180 57 L168 69" stroke="#e0001a" stroke-width="3.2"/>
<path d="M191.5 55.5 L199.5 55.5 L202.5 58.5 L202.5 70.5 L191.5 70.5 Z" fill="#f6f7fb" stroke="#8c8c8c" stroke-width="1"/>
<path d="M199.5 55.5 L199.5 58.5 L202.5 58.5" fill="#fff" stroke="#8c8c8c" stroke-width="1"/>
<path d="M193.5 63.5 L196.5 66.5 L201.5 61" fill="none" stroke="#f07a3a" stroke-width="1.6"/>
<path d="M223.5 62 L227.5 66 L225 66 L225 70.5 L222 70.5 L222 66 L219.5 66 Z" fill="#1a9a1a"/>
<circle cx="248" cy="64" r="3.2" fill="#cfe3f2" stroke="#8a9aa8" stroke-width="1.2"/>
<path d="M245.7 66.5 L241.5 71" stroke="#555" stroke-width="1.4"/>
<path d="M261 60.5 L262.3 62.3 L264.6 59 M261 64.5 L262.3 66.3 L264.6 63" fill="none" stroke="#3a7ce8" stroke-width="1.3"/>
</svg>
</body></html>
